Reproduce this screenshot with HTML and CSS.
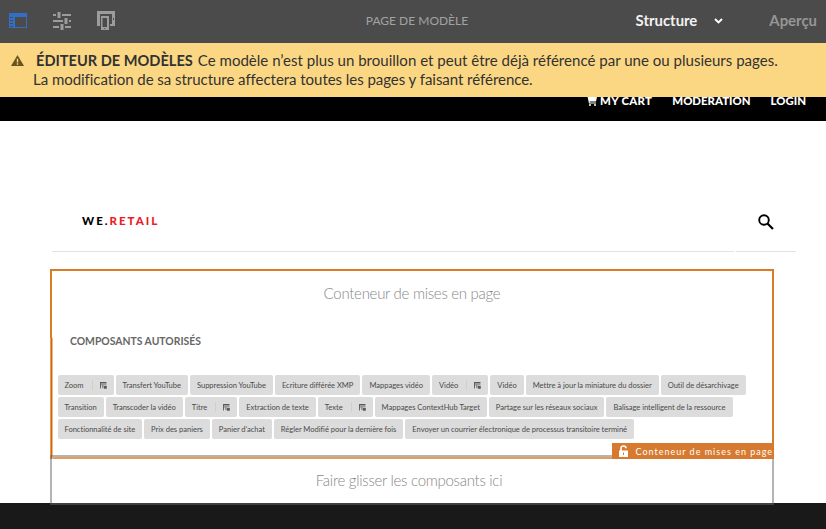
FILE: index.html
```html
<!DOCTYPE html>
<html lang="fr">
<head>
<meta charset="utf-8">
<title>Éditeur de modèles</title>
<link rel="stylesheet" href="styles.css">
</head>
<body>
<svg class="defs" width="0" height="0">
  <symbol id="policy" viewBox="0 0 7 7">
    <path d="M0 0h6.500v1.600H0zM0 2.400h6.500v.800H0zM0 0h.900v6.500H0zM2.400 3h.800v3h-.8zM3.800 4h3v2.800h-3z" fill="#5a5a5a"/>
  </symbol>
</svg>
<header class="toolbar">
  <div class="tools">
    <svg width="18" height="15" viewBox="0 0 18 15"><path fill="#326ec8" fill-rule="evenodd" d="M0 0h18v15H0zM6 4v10h11V4zM1 4v1h3V4zM1 7v1h3V7zM1 10v1h3v-1zM1 13v1h3v-1z"/></svg>
    <svg width="18" height="18" viewBox="0 0 18 18"><path fill="#9c9c9c" d="M0 2h3v2H0zM9 2h9v2H9zM4.500 0h3v6h-3zM0 8h10v2H0zM16 8h2v2h-2zM11.500 6h3v6h-3zM0 14h6v2H0zM12 14h6v2h-6zM7.500 12h3v6h-3z"/></svg>
    <svg width="18" height="19" viewBox="0 0 18 19"><path fill="#9c9c9c" fill-rule="evenodd" d="M0 0h18v15h-5v-2h2V3H3v12H0zM4 5h8v14H4zM5.500 7v9h4.500V7zM7.300 17h1v1h-1zM16 7v2h1V7z"/></svg>
  </div>
  <h1 class="page-title">PAGE DE MODÈLE</h1>
  <nav class="modes">
    <span class="mode">Structure</span>
    <svg class="chevron" width="9" height="6" viewBox="0 0 9 6"><path d="M1 1l3.500 3.500L8 1" fill="none" stroke="#fff" stroke-width="1.900"/></svg>
    <span class="mode muted">Aperçu</span>
  </nav>
</header>
<div class="banner">
  <svg width="13" height="11" viewBox="0 0 13 11"><path d="M6.500 0L13 11H0z" fill="#685421"/><path d="M5.800 3.800h1.400v3.600H5.800zM5.800 8.300h1.400v1.400H5.800z" fill="#fbd783"/></svg>
  <p class="first"><strong>ÉDITEUR DE MODÈLES</strong> <span>Ce modèle n’est plus un brouillon et peut être déjà référencé par une ou plusieurs pages.</span></p>
  <p class="second">La modification de sa structure affectera toutes les pages y faisant référence.</p>
</div>
<div class="site-nav">
  <span class="cart"><svg width="11" height="11" viewBox="0 0 11 11"><path d="M0 .5h2.200L2.700 2H11l-1 4.500H3.600L3.800 7.500H10v1H3L1.500 1.500H0z" fill="#fff"/><circle cx="4" cy="10" r="1" fill="#fff"/><circle cx="9" cy="10" r="1" fill="#fff"/></svg>MY CART</span>
  <span>MODERATION</span>
  <span>LOGIN</span>
</div>
<main>
  <div class="brand">
    <div class="logo">WE.<b>RETAIL</b></div>
    <svg width="16" height="16" viewBox="0 0 16 16"><circle cx="6" cy="6" r="4.800" fill="none" stroke="#000" stroke-width="1.900"/><path d="M9.500 9.500L15 15" stroke="#000" stroke-width="2.200"/></svg>
  </div>
  <div class="rules"><i></i><i></i></div>
  <section class="container">
    <p class="placeholder">Conteneur de mises en page</p>
    <h2>COMPOSANTS AUTORISÉS</h2>
    <div class="chips">
      <div class="row">
        <span class="chip">Zoom<i></i><svg><use href="#policy"/></svg></span><span class="chip">Transfert YouTube</span><span class="chip">Suppression YouTube</span><span class="chip">Ecriture différée XMP</span><span class="chip">Mappages vidéo</span><span class="chip">Vidéo<i></i><svg><use href="#policy"/></svg></span><span class="chip">Vidéo</span><span class="chip">Mettre à jour la miniature du dossier</span><span class="chip">Outil de désarchivage</span>
      </div>
      <div class="row">
        <span class="chip">Transition</span><span class="chip">Transcoder la vidéo</span><span class="chip">Titre<i></i><svg><use href="#policy"/></svg></span><span class="chip">Extraction de texte</span><span class="chip">Texte<i></i><svg><use href="#policy"/></svg></span><span class="chip">Mappages ContextHub Target</span><span class="chip">Partage sur les réseaux sociaux</span><span class="chip">Balisage intelligent de la ressource</span>
      </div>
      <div class="row">
        <span class="chip">Fonctionnalité de site</span><span class="chip">Prix des paniers</span><span class="chip">Panier d’achat</span><span class="chip">Régler Modifié pour la dernière fois</span><span class="chip">Envoyer un courrier électronique de processus transitoire terminé</span>
      </div>
    </div>
    <div class="tag">
      <svg width="9" height="12" viewBox="0 0 9 12"><path d="M2 6V3.200C2 1.600 3 1 4.500 1S7 1.800 7 3.200" fill="none" stroke="#fff" stroke-width="1.600"/><path fill="#fff" fill-rule="evenodd" d="M0 5.500h9V12H0zM4 7.500v2.500h1V7.500z"/></svg>
      <span>Conteneur de mises en page</span>
    </div>
  </section>
  <section class="dropzone"><p class="placeholder">Faire glisser les composants ici</p></section>
</main>
<footer></footer>
</body>
</html>
```
FILE: styles.css
```css
* { box-sizing: border-box; margin: 0; padding: 0; }
body { width: 826px; height: 529px; overflow: hidden; display: flex; flex-direction: column; background: #fff; font-family: Lato, "Noto Sans", sans-serif; white-space: nowrap; }
svg { display: block; flex: none; }
.defs { position: absolute; }

.toolbar { height: 43px; flex: none; display: flex; align-items: center; justify-content: space-between; background: #4b4b4b; padding: 0 9px; }
.tools { display: flex; flex: 1; gap: 26px; align-items: center; padding-bottom: 2px; }
.page-title { font-size: 12px; font-weight: 400; color: #a2a2a2; margin-left: 8px; padding-bottom: 2px; }
.modes { display: flex; flex: 1; align-items: center; justify-content: flex-end; padding-bottom: 3px; }
.mode { font-size: 14.9px; font-weight: 700; color: #f2f2f2; }
.mode:first-child { padding-bottom: 1px; }
.chevron { margin: 1px 46px 0 17px; }
.muted { color: #969696; padding-bottom: 1px; }

.banner { height: 54px; flex: none; display: grid; grid-template-columns: 25px 1fr; grid-template-rows: 19px 19px; padding: 8px 0 0 11px; background: #fbd783; color: #323232; font-size: 15.05px; line-height: 19px; position: relative; z-index: 1; }
.banner svg { margin-top: 4px; }
.first { display: flex; gap: 5px; }
.first strong { font-size: 14.6px; font-weight: 700; }
.second { grid-column: 1 / 3; padding-left: 22px; letter-spacing: -.06px; }

.site-nav { height: 24px; flex: none; display: flex; justify-content: flex-end; gap: 20px; padding-right: 20px; background: #000; color: #fff; font-weight: 900; font-size: 11.4px; line-height: 14px; }
.site-nav span { margin-top: -3px; }
.cart { display: flex; gap: 3px; letter-spacing: .3px; }
.cart svg { margin-top: 1px; }

main { height: 382px; flex: none; position: relative; z-index: 1; }
.brand { height: 130px; display: flex; justify-content: space-between; align-items: flex-start; padding: 92px 52px 0 82px; }
.logo { font-weight: 900; font-size: 11.5px; line-height: 16px; letter-spacing: 2px; color: #000; }
.logo b { font-weight: 900; color: #ed1c24; }
.brand svg { margin-top: 1px; }
.rules { display: flex; gap: 2px; padding: 0 30px 0 52px; }
.rules i { height: 1px; width: 682px; background: #e2e2e2; }
.rules i + i { width: 60px; }

.container { position: relative; width: 724px; height: 190px; margin: 17px 0 0 50px; border: 2px solid #da7b27; border-bottom-color: #e69d57; padding-left: 5.500px; }
.container::before { content: ""; position: absolute; left: -2px; top: 67px; width: 3px; height: 121px; background: linear-gradient(90deg, #e79b52 1px, #cb6813 1px, #cb6813 2px, #efb987 2px); }
.placeholder { font-size: 15px; letter-spacing: -.28px; font-weight: 300; color: #888; text-align: center; line-height: 20px; }
.container .placeholder { padding-top: 12px; margin-left: -5.500px; }
h2 { margin: 30px 0 0 12.500px; font-size: 10.4px; line-height: 16px; font-weight: 700; color: #666; }
.chips { display: flex; flex-direction: column; gap: 2px; margin-top: 26px; }
.row { display: flex; gap: 2px; }
.chip { display: flex; align-items: center; height: 20px; padding: 0 7px; border-radius: 2px; background: #dcdcdc; color: #4b4b4b; font-size: 7.58px; letter-spacing: -.036px; }
.chip i { width: 1px; height: 10px; margin: 0 7px 0 8px; background: #cfcfcf; }
.chip svg { width: 7px; height: 7px; }
.tag { position: absolute; right: -2px; bottom: -2px; z-index: 2; width: 162px; height: 16px; display: flex; align-items: center; gap: 7.500px; padding-left: 7px; background: #d77a30; color: #fff; font-size: 9px; letter-spacing: 1px; }
.tag svg { margin-bottom: 1px; }
.tag span { padding-top: 1px; }

.dropzone { position: relative; width: 724px; height: 50px; margin: -4px 0 0 50px; border: 2px solid rgba(105, 105, 105, .5); padding-top: 13px; }
.dropzone .placeholder { margin-right: 6px; }
footer { flex: 1; background: #191919; }
```
